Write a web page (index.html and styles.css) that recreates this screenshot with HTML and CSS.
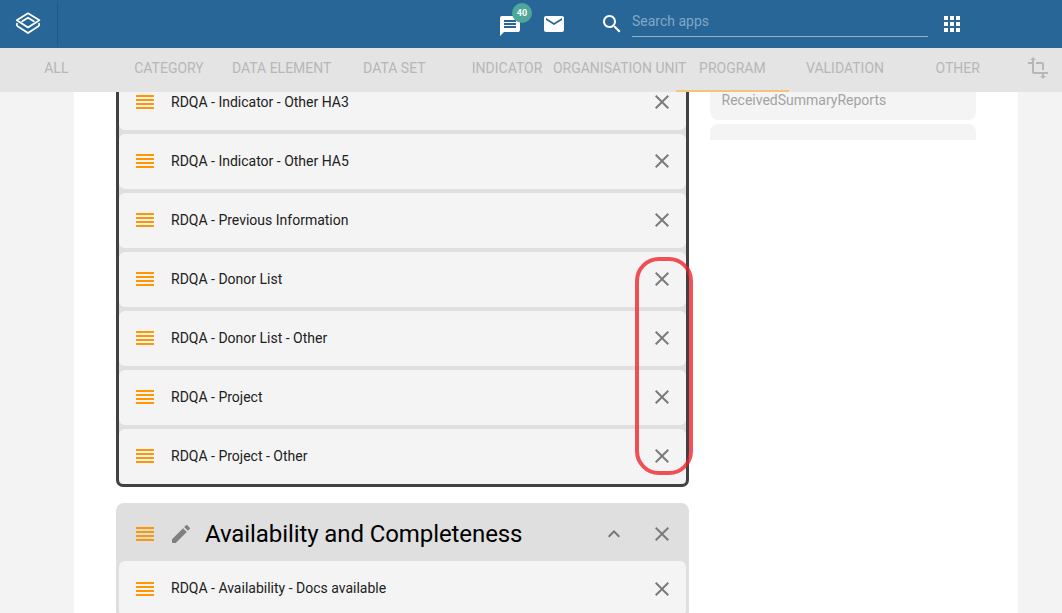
FILE: index.html
```
<!DOCTYPE html>
<html lang="en">
<head>
<meta charset="utf-8">
<title>Program</title>
<link rel="stylesheet" href="styles.css">
</head>
<body>
<svg class="defs" aria-hidden="true">
  <symbol id="drag" viewBox="0 0 24 24"><path d="M3 15h18v-2H3v2zm0 4h18v-2H3v2zm0-8h18V9H3v2zm0-6v2h18V5H3z"/></symbol>
  <symbol id="close" viewBox="0 0 24 24"><path d="M19 6.41L17.59 5 12 10.59 6.41 5 5 6.41 10.59 12 5 17.59 6.41 19 12 13.41 17.59 19 19 17.59 13.41 12z"/></symbol>
</svg>
<header class="topbar">
  <div class="brand">
    <svg class="logo" viewBox="0 0 26 24"><path d="M13 1.3 24.4 8.3 13 15.4 1.8 8.3zM7.2 9.2 13 5.7 18.8 9.2M2 11.8Q1.2 13.2 2.6 14.2L13 21 23.4 14.2Q24.8 13.2 24 11.8"/></svg>
  </div>
  <div class="message">
    <svg class="icon" viewBox="0 0 24 24"><path d="M20 2H4c-1.1 0-1.99.9-1.99 2L2 22l4-4h14c1.1 0 2-.9 2-2V4c0-1.1-.9-2-2-2zM6 9h12v2H6V9zm12 5H6v-2h12v2zm0-6H6V6h12v2z"/></svg>
    <span class="badge">40</span>
  </div>
  <svg class="icon mail" viewBox="0 0 24 24"><path d="M20 4H4c-1.1 0-1.99.9-1.99 2L2 18c0 1.1.9 2 2 2h16c1.1 0 2-.9 2-2V6c0-1.1-.9-2-2-2zm0 4l-8 5-8-5V6l8 5 8-5v2z"/></svg>
  <svg class="icon lens" viewBox="0 0 24 24"><path d="M15.5 14h-.79l-.28-.27C15.41 12.59 16 11.11 16 9.5 16 5.91 13.09 3 9.5 3S3 5.91 3 9.5 5.91 16 9.5 16c1.61 0 3.09-.59 4.23-1.57l.27.28v.79l5 4.99L20.49 19l-4.99-5zm-6 0C7.01 14 5 11.99 5 9.5S7.01 5 9.5 5 14 7.01 14 9.5 11.99 14 9.5 14z"/></svg>
  <div class="search">Search apps</div>
  <svg class="icon apps" viewBox="0 0 24 24"><path d="M4 8h4V4H4v4zm6 12h4v-4h-4v4zm-6 0h4v-4H4v4zm0-6h4v-4H4v4zm6 0h4v-4h-4v4zm6-10v4h4V4h-4zm-6 4h4V4h-4v4zm6 6h4v-4h-4v4zm0 6h4v-4h-4v4z"/></svg>
</header>
<nav class="tabs">
  <div class="tab">ALL</div>
  <div class="tab">CATEGORY</div>
  <div class="tab">DATA ELEMENT</div>
  <div class="tab">DATA SET</div>
  <div class="tab">INDICATOR</div>
  <div class="tab">ORGANISATION UNIT</div>
  <div class="tab active">PROGRAM</div>
  <div class="tab">VALIDATION</div>
  <div class="tab">OTHER</div>
  <div class="tool"><svg class="crop" viewBox="0 0 24 24"><path d="M22 18v-2H8V4h2L7 1 4 4h2v2H2v2h4v8c0 1.1.9 2 2 2h8v2h-2l3 3 3-3h-2v-2h4zM10 8h6v6h2V8c0-1.1-.9-2-2-2h-6v2z"/></svg></div>
</nav>
<main class="viewport">
  <div class="sheet">
    <div class="groups">
      <section class="group selected">
        <div class="row"><svg class="drag"><use href="#drag"/></svg><span class="label">RDQA - Indicator - Other HA3</span><svg class="close"><use href="#close"/></svg></div>
        <div class="row"><svg class="drag"><use href="#drag"/></svg><span class="label">RDQA - Indicator - Other HA5</span><svg class="close"><use href="#close"/></svg></div>
        <div class="row"><svg class="drag"><use href="#drag"/></svg><span class="label">RDQA - Previous Information</span><svg class="close"><use href="#close"/></svg></div>
        <div class="row"><svg class="drag"><use href="#drag"/></svg><span class="label">RDQA - Donor List</span><svg class="close"><use href="#close"/></svg></div>
        <div class="row"><svg class="drag"><use href="#drag"/></svg><span class="label">RDQA - Donor List - Other</span><svg class="close"><use href="#close"/></svg></div>
        <div class="row"><svg class="drag"><use href="#drag"/></svg><span class="label">RDQA - Project</span><svg class="close"><use href="#close"/></svg></div>
        <div class="row"><svg class="drag"><use href="#drag"/></svg><span class="label">RDQA - Project - Other</span><svg class="close"><use href="#close"/></svg></div>
      </section>
      <section class="group">
        <div class="group-head">
          <svg class="drag"><use href="#drag"/></svg>
          <svg class="pencil" viewBox="0 0 24 24"><path d="M3 17.25V21h3.75L17.81 9.94l-3.75-3.75L3 17.25zM20.71 7.04c.39-.39.39-1.02 0-1.41l-2.34-2.34c-.39-.39-1.02-.39-1.41 0l-1.83 1.83 3.75 3.75 1.83-1.83z"/></svg>
          <h2 class="title">Availability and Completeness</h2>
          <svg class="chevron" viewBox="0 0 24 24"><path d="M12 8l-6 6 1.41 1.41L12 10.83l4.59 4.58L18 14z"/></svg>
          <svg class="close"><use href="#close"/></svg>
        </div>
        <div class="row first"><svg class="drag"><use href="#drag"/></svg><span class="label">RDQA - Availability - Docs available</span><svg class="close"><use href="#close"/></svg></div>
      </section>
    </div>
    <aside class="cards">
      <div class="card">ReceivedSummaryReports</div>
      <div class="card"></div>
    </aside>
  </div>
</main>
<div class="highlight"></div>
</body>
</html>
```
FILE: styles.css
```
* { box-sizing: border-box; }
body {
  margin: 0;
  height: 613px;
  overflow: hidden;
  display: flex;
  flex-direction: column;
  background: #f3f3f3;
  font-family: Roboto, "Liberation Sans", sans-serif;
  font-size: 14px;
}
svg { display: block; flex: none; fill: currentColor; }
.defs { position: absolute; width: 0; height: 0; }

.topbar {
  flex: none;
  height: 48px;
  display: flex;
  align-items: center;
  background: #276696;
  color: #fff;
}
.brand {
  width: 58px;
  height: 42px;
  margin-right: 440px;
  padding: 9px 0 0 15px;
  border-right: 1px solid #22577f;
}
.logo { width: 26px; height: 24px; fill: none; stroke: #fff; stroke-width: 1.8; stroke-linejoin: round; stroke-linecap: round; }
.icon { width: 24px; height: 24px; }
.message { position: relative; padding-top: 4px; }
.badge {
  position: absolute;
  left: 14px;
  top: -7px;
  width: 20px;
  height: 20px;
  border-radius: 50%;
  background: #4da899;
  font-size: 9px;
  font-weight: 700;
  line-height: 21px;
  text-align: center;
}
.mail { margin-left: 20px; }
.lens { margin-left: 34px; }
.search {
  align-self: flex-start;
  width: 296px;
  height: 32px;
  margin: 5px 12px 0 8px;
  padding-top: 8px;
  line-height: 16px;
  border-bottom: 1px solid #93b3cb;
  color: #81a8c5;
}

.tabs {
  flex: none;
  height: 44px;
  display: flex;
  background: #e4e4e4;
  color: #b7b7b7;
}
.tab {
  flex: 1 1 0;
  min-width: 0;
  display: flex;
  justify-content: center;
  white-space: nowrap;
  line-height: 16px;
  padding-top: 12px;
}
.active { border-bottom: 2px solid #f3c57c; }
.tool { width: 48px; padding: 8px 0 0 12px; }
.crop { width: 24px; height: 24px; }

.viewport { flex: 1; min-height: 0; overflow: hidden; }
.sheet {
  width: 944px;
  height: 521px;
  margin-left: 74px;
  padding-left: 42px;
  display: flex;
  overflow: hidden;
  background: #fff;
}
.groups {
  width: 573px;
  flex: none;
  margin-top: -20px;
  display: flex;
  flex-direction: column;
  gap: 16px;
}
.group {
  flex: none;
  display: flex;
  flex-direction: column;
  gap: 4px;
  padding: 0 3px 3px;
  border-radius: 8px;
  background: #dfdfdf;
}
.selected { padding: 0; border: 3px solid #414141; border-radius: 7px; }
.row {
  height: 55px;
  display: flex;
  align-items: center;
  padding: 0 12px 1px 14px;
  border-radius: 6px;
  background: #f4f4f4;
  color: #212121;
}
.first { padding-bottom: 0; }
.drag { width: 24px; height: 24px; color: #ff9800; }
.label { flex: 1; margin-left: 14px; line-height: 16px; }
.first .label { padding-bottom: 2px; }
.close { width: 24px; height: 24px; color: #7b7b7b; }
.group-head {
  height: 58px;
  margin-bottom: -4px;
  padding: 4px 12px 0 14px;
  display: flex;
  align-items: center;
}
.pencil { width: 24px; height: 24px; margin-left: 12px; color: #808080; }
.title { flex: 1; margin: 0 0 0 12px; font-size: 24px; font-weight: 400; line-height: 28px; letter-spacing: -0.09px; color: #000; }
.chevron { width: 24px; height: 24px; margin-right: 24px; color: #757575; }

.cards {
  width: 266px;
  height: 68px;
  margin: -20px 0 0 21px;
  display: flex;
  flex-direction: column;
  gap: 4px;
  overflow: hidden;
}
.card {
  flex: none;
  height: 48px;
  padding: 20px 12px 0 11.5px;
  border-radius: 8px;
  background: #f4f4f4;
  color: #a3a3a3;
  line-height: 16px;
}

.highlight {
  position: absolute;
  left: 635px;
  top: 257px;
  width: 58px;
  height: 218px;
  border: 4px solid rgba(237, 28, 36, .77);
  border-radius: 24px;
}
```
